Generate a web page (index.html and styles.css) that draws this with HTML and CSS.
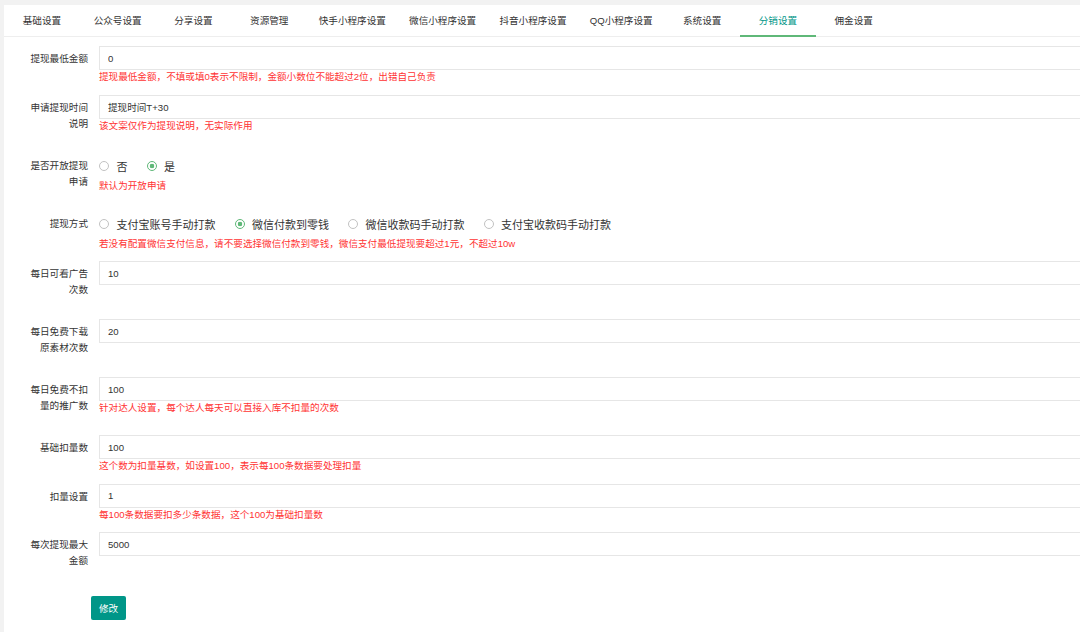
FILE: index.html
```html
<!DOCTYPE html>
<html lang="zh-CN">
<head>
<meta charset="utf-8">
<title>分销设置</title>
<link rel="stylesheet" href="styles.css">
</head>
<body>
<div class="page">
  <div class="panel">
    <ul class="tabs">
      <li>基础设置</li>
      <li>公众号设置</li>
      <li>分享设置</li>
      <li>资源管理</li>
      <li>快手小程序设置</li>
      <li>微信小程序设置</li>
      <li>抖音小程序设置</li>
      <li>QQ小程序设置</li>
      <li>系统设置</li>
      <li class="active">分销设置</li>
      <li>佣金设置</li>
    </ul>
    <form class="form">
      <div class="item">
        <label class="label">提现最低金额</label>
        <div class="block">
          <input class="input" value="0">
          <div class="aux">提现最低金额，不填或填0表示不限制，金额小数位不能超过2位，出错自己负责</div>
        </div>
      </div>
      <div class="item">
        <label class="label">申请提现时间说明</label>
        <div class="block">
          <input class="input" value="提现时间T+30">
          <div class="aux">该文案仅作为提现说明，无实际作用</div>
        </div>
      </div>
      <div class="item">
        <label class="label">是否开放提现申请</label>
        <div class="block">
          <div class="radios">
            <span class="radio"><i></i>否</span>
            <span class="radio on"><i></i>是</span>
          </div>
          <div class="aux">默认为开放申请</div>
        </div>
      </div>
      <div class="item">
        <label class="label">提现方式</label>
        <div class="block">
          <div class="radios">
            <span class="radio"><i></i>支付宝账号手动打款</span>
            <span class="radio on"><i></i>微信付款到零钱</span>
            <span class="radio"><i></i>微信收款码手动打款</span>
            <span class="radio"><i></i>支付宝收款码手动打款</span>
          </div>
          <div class="aux">若没有配置微信支付信息，请不要选择微信付款到零钱，微信支付最低提现要超过1元，不超过10w</div>
        </div>
      </div>
      <div class="item">
        <label class="label">每日可看广告次数</label>
        <div class="block">
          <input class="input" value="10">
        </div>
      </div>
      <div class="item">
        <label class="label">每日免费下载原素材次数</label>
        <div class="block">
          <input class="input" value="20">
        </div>
      </div>
      <div class="item">
        <label class="label">每日免费不扣量的推广数</label>
        <div class="block">
          <input class="input" value="100">
          <div class="aux">针对达人设置，每个达人每天可以直接入库不扣量的次数</div>
        </div>
      </div>
      <div class="item">
        <label class="label">基础扣量数</label>
        <div class="block">
          <input class="input" value="100">
          <div class="aux">这个数为扣量基数，如设置100，表示每100条数据要处理扣量</div>
        </div>
      </div>
      <div class="item">
        <label class="label">扣量设置</label>
        <div class="block">
          <input class="input" value="1">
          <div class="aux">每100条数据要扣多少条数据，这个100为基础扣量数</div>
        </div>
      </div>
      <div class="item">
        <label class="label">每次提现最大金额</label>
        <div class="block">
          <input class="input" value="5000">
        </div>
      </div>
      <div class="btn-row">
        <button type="button" class="btn">修改</button>
      </div>
    </form>
  </div>
</div>
</body>
</html>
```
FILE: styles.css
```css
html, body {
  margin: 0;
  height: 100%;
  overflow: hidden;
  background: #f2f2f2;
}
body {
  font-family: "Liberation Sans", "Noto Sans CJK SC", sans-serif;
  font-size: 9.6px;
  color: #333;
}
.page {
  padding: 5px 0 0 4px;
  height: 100%;
  box-sizing: border-box;
}
.panel {
  background: #fff;
  height: 100%;
}
.tabs {
  display: flex;
  margin: 0;
  padding: 0;
  list-style: none;
  height: 31px;
  border-bottom: 1px solid #eeeeee;
}
.tabs li {
  position: relative;
  min-width: 52.6px;
  padding: 0 11.6px;
  text-align: center;
  line-height: 31px;
  white-space: nowrap;
  color: #333;
}
.tabs li.active {
  color: #009688;
}
.tabs li.active::after {
  content: "";
  position: absolute;
  left: 0;
  right: 0;
  bottom: -1px;
  height: 2px;
  background: #5fb878;
}
.form {
  padding: 9px 0 0 11px;
}
.item {
  display: flex;
  margin-bottom: 10.5px;
}
.label {
  flex: none;
  width: 62px;
  padding: 5px 11px 10.5px;
  text-align: right;
  line-height: 16px;
  color: #333;
}
.block {
  flex: 1;
  min-width: 0;
  margin-right: -20px;
}
.input {
  display: block;
  box-sizing: border-box;
  width: 100%;
  height: 24px;
  margin: 0;
  border: 1px solid #e6e6e6;
  padding: 0 8px;
  font: inherit;
  color: #333;
  background: #fff;
  outline: none;
}
.aux {
  color: #ff3333;
  line-height: 14px;
}
.radios {
  display: flex;
  align-items: center;
  height: 26px;
  font-size: 11px;
}
.radio {
  display: inline-flex;
  align-items: center;
  margin-right: 19px;
  color: #333;
}
.radio i {
  display: block;
  box-sizing: border-box;
  width: 10px;
  height: 10px;
  border: 1px solid #c2c2c2;
  border-radius: 50%;
  margin-right: 7.5px;
}
.radio.on i {
  border-color: #5fb878;
  background: radial-gradient(circle, #5fb878 0 2px, #fff 2.6px);
}
.btn-row {
  padding-top: 6px;
  padding-left: 76px;
}
.btn {
  display: block;
  width: 35px;
  height: 24px;
  padding: 0;
  border: none;
  border-radius: 2px;
  background: #009688;
  color: #fff;
  font: inherit;
  cursor: pointer;
}
```
